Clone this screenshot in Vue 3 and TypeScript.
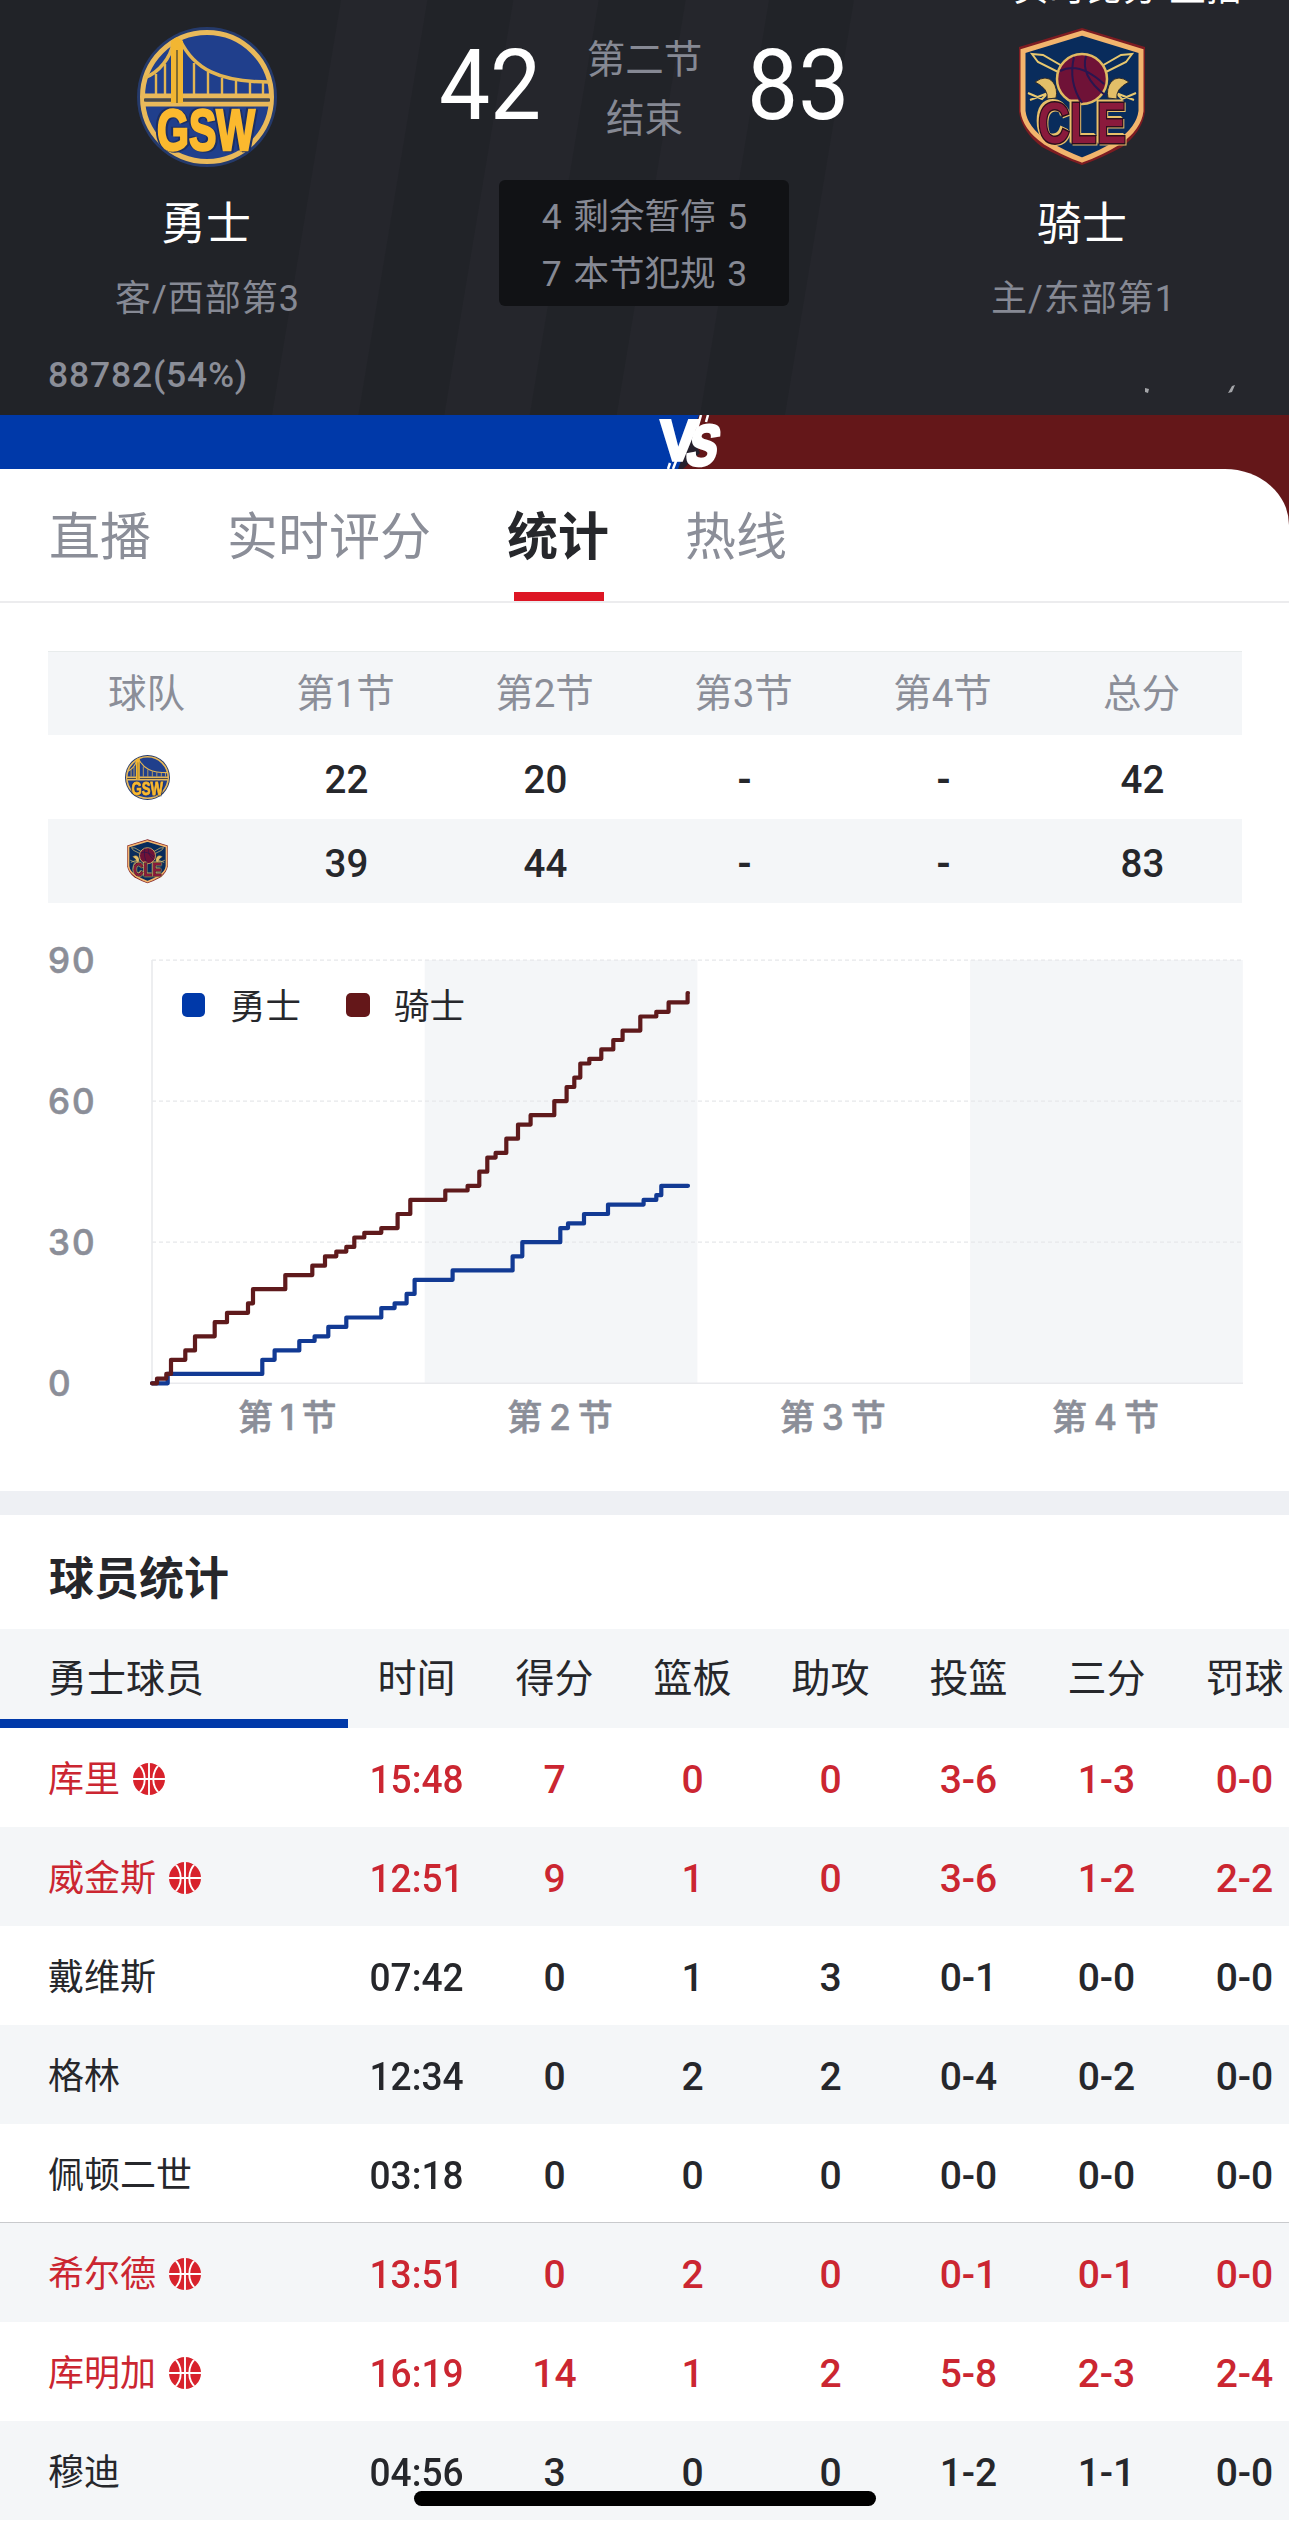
<script setup lang="ts">
import { computed } from 'vue'

interface Player {
  name: string
  onCourt: boolean
  stats: string[]
}

type Step = [number, number] // [x offset in the plot, score]

const tabs = ['直播', '实时评分', '统计', '热线']
const activeTab = '统计'

const quarterHeads = ['球队', '第1节', '第2节', '第3节', '第4节', '总分']
const quarterRows = [
  { logo: '#logo-gsw', scores: ['22', '20', '-', '-', '42'] },
  { logo: '#logo-cle', scores: ['39', '44', '-', '-', '83'] }
]

const statHeads = ['时间', '得分', '篮板', '助攻', '投篮', '三分', '罚球']
const players: Player[] = [
  { name: '库里', onCourt: true, stats: ['15:48', '7', '0', '0', '3-6', '1-3', '0-0'] },
  { name: '威金斯', onCourt: true, stats: ['12:51', '9', '1', '0', '3-6', '1-2', '2-2'] },
  { name: '戴维斯', onCourt: false, stats: ['07:42', '0', '1', '3', '0-1', '0-0', '0-0'] },
  { name: '格林', onCourt: false, stats: ['12:34', '0', '2', '2', '0-4', '0-2', '0-0'] },
  { name: '佩顿二世', onCourt: false, stats: ['03:18', '0', '0', '0', '0-0', '0-0', '0-0'] },
  { name: '希尔德', onCourt: true, stats: ['13:51', '0', '2', '0', '0-1', '0-1', '0-0'] },
  { name: '库明加', onCourt: true, stats: ['16:19', '14', '1', '2', '5-8', '2-3', '2-4'] },
  { name: '穆迪', onCourt: false, stats: ['04:56', '3', '0', '0', '1-2', '1-1', '0-0'] }
]

// Chart geometry
const left = 104
const bottom = 433.3
const perPoint = 4.703
const quarterWidth = 272.7
const end = 536

const awaySteps: Step[] = [
  [15.7, 2], [110.3, 5], [122.6, 7], [147.3, 9], [162.6, 10], [176.3, 12], [194.3, 14],
  [229.3, 16], [242.6, 17], [254.6, 19], [262.6, 22], [300.6, 24], [360.6, 27], [370.3, 30],
  [408.3, 33], [416, 34], [432, 36], [456, 38], [491.6, 39], [504.3, 40], [509.3, 42]
]
const homeSteps: Step[] = [
  [5, 1], [14.3, 2], [19, 5], [33.3, 7], [43, 10], [62.7, 13], [75, 15], [96, 17], [101, 20],
  [133.3, 23], [160.3, 25], [173, 27], [184.3, 28], [194.3, 29], [202.3, 31], [212.3, 32],
  [229.3, 33], [245.6, 36], [258.3, 39], [293.3, 41], [315.6, 42], [327.3, 45], [335.3, 48],
  [343.6, 49], [354.3, 52], [366, 55], [378.6, 57], [402.3, 60], [414.6, 63], [422.3, 65],
  [428.3, 68], [437.3, 69], [449.3, 71], [461.3, 73], [470.6, 75], [488.3, 78], [504.3, 79],
  [516.6, 81], [535.6, 83]
]

const scoreY = (score: number) => bottom - score * perPoint

function stepPath(steps: Step[]) {
  let d = `M${left} ${bottom}`
  for (const [x, score] of steps) {
    d += `H${(left + x).toFixed(1)}V${scoreY(score).toFixed(1)}`
  }
  return `${d}H${left + end}`
}

const awayPath = computed(() => stepPath(awaySteps))
const homePath = computed(() => stepPath(homeSteps))
</script>

<template>
  <div class="page">
    <!-- Shared logo symbols -->
    <svg class="defs" width="0" height="0">
      <symbol id="logo-gsw" viewBox="0 0 140 140">
        <circle cx="70" cy="70" r="70" fill="#253a6b" />
        <circle cx="70" cy="70" r="64.5" fill="#203f8c" stroke="#e9b95a" stroke-width="5" />
        <g fill="none" stroke="#e3b552">
          <path d="M7 51C22 46 34 30 36 16M43 13C57 42 82 55 132 55" stroke-width="3.5" />
          <path
            d="M19 47V67M28 37V67M57 36V67M71 45V67M85 51V67M99 54V67M113 55V67M126 55V67"
            stroke-width="2.4"
          />
        </g>
        <path d="M6 69H134M7 77H133" stroke="#e9b95a" stroke-width="5" />
        <path d="M7 73H133" stroke="#4d4a42" stroke-width="3" />
        <path d="M34 14L40 10L46 14V76H34Z" fill="#f2b632" />
        <path d="M40 23V76" stroke="#60552f" stroke-width="1.5" />
        <text
          x="69"
          y="123"
          text-anchor="middle"
          class="mark-text gsw-text"
          font-size="57"
          textLength="98"
          lengthAdjust="spacingAndGlyphs"
        >GSW</text>
      </symbol>
      <symbol id="logo-cle" viewBox="0 0 140 140">
        <path
          d="M70 1L133 20V85Q130 105 110 120Q90 131 70 138Q50 131 30 120Q10 105 7 85V20Z"
          fill="#7d1c22"
        />
        <path
          d="M70 6L129 24V84Q127 101 107 115Q89 126 70 133Q51 126 33 115Q13 101 11 84V24Z"
          fill="#092c5c"
          stroke="#f2b46d"
          stroke-width="5"
        />
        <g fill="none" stroke="#e8c86f" stroke-width="2">
          <path d="M20 27L31 28L52 40L48 46L26 35ZM120 27L109 28L88 40L92 46L114 35Z" />
          <path d="M16 66L30 72L40 62M18 73L36 66M124 66L110 72L100 62M122 73L104 66" />
        </g>
        <g fill="#e3bf68" stroke="#2c2a2c" stroke-width="1">
          <path d="M23 55Q34 47 41 55Q46 62 44 71L35 72Q37 62 23 55Z" />
          <path d="M117 55Q106 47 99 55Q94 62 96 71L105 72Q103 62 117 55Z" />
        </g>
        <circle cx="70" cy="52" r="25" fill="#6f1237" stroke="#e0ba62" stroke-width="2.5" />
        <path
          d="M62 30Q56 55 70 76M48 44Q67 34 92 57M74 29Q68 49 93 68"
          fill="none"
          stroke="#29164f"
          stroke-width="2"
        />
        <text
          x="70"
          y="116"
          text-anchor="middle"
          class="mark-text cle-text"
          font-size="57"
          textLength="88"
          lengthAdjust="spacingAndGlyphs"
        >CLE</text>
      </symbol>
      <symbol id="icon-ball" viewBox="0 0 32 32">
        <clipPath id="ball-clip"><circle cx="16" cy="16" r="16" /></clipPath>
        <g clip-path="url(#ball-clip)">
          <rect width="32" height="32" fill="#d8222c" />
          <path
            d="M16 0V32M0 16H32M5 1C14 9 14 23 5 31M27 1C18 9 18 23 27 31"
            fill="none"
            stroke="#fff"
            stroke-width="1.9"
          />
        </g>
      </symbol>
    </svg>

    <header class="scoreboard">
      <div class="ticker">实时比分 直播</div>
      <div class="match">
        <div class="team">
          <svg class="team-logo"><use href="#logo-gsw" /></svg>
          <div class="team-name">勇士</div>
          <div class="team-rank">客/西部第3</div>
        </div>
        <div class="center">
          <div class="score-line">
            <span class="score">42</span>
            <div class="period">
              <span>第二节</span>
              <span>结束</span>
            </div>
            <span class="score">83</span>
          </div>
          <div class="fouls">
            <span>4 剩余暂停 5</span>
            <span>7 本节犯规 3</span>
          </div>
        </div>
        <div class="team">
          <svg class="team-logo"><use href="#logo-cle" /></svg>
          <div class="team-name">骑士</div>
          <div class="team-rank">主/东部第1</div>
        </div>
      </div>
      <div class="support">
        <span>88782(54%)</span>
        <svg class="support-marks" width="94" height="12" viewBox="0 0 94 12">
          <path d="M4 4L8 5L7 9L4 8ZM91 2L94 1L91 8L87 9Z" fill="#a4a5a9" />
        </svg>
      </div>
    </header>

    <div class="vs-bar">
      <svg width="1289" height="54" viewBox="0 0 1289 54">
        <rect width="1289" height="54" fill="#641719" />
        <path d="M0 0H699L681 54H0Z" fill="#0039a9" />
        <path d="M699 0L693 22L700 38L683 54H678L690 22Z" fill="#26212d" />
        <g class="vs-text">
          <text transform="translate(659 45) skewX(-3)" font-size="57" textLength="37" lengthAdjust="spacingAndGlyphs">V</text>
          <text transform="translate(684 50) skewX(-14)" font-size="57" textLength="30" lengthAdjust="spacingAndGlyphs">S</text>
        </g>
        <path d="M701 0L697 14M708 0L706 7M678 41L673 54M670 48L668 54" stroke="#fff" stroke-width="2.5" />
      </svg>
    </div>

    <div class="sheet-wrap">
      <nav class="tabs">
        <div v-for="tab in tabs" :key="tab" class="tab" :class="{ active: tab === activeTab }">
          {{ tab }}
        </div>
      </nav>
    </div>

    <section class="quarters">
      <div class="quarter-row head">
        <span v-for="head in quarterHeads" :key="head">{{ head }}</span>
      </div>
      <div v-for="row in quarterRows" :key="row.logo" class="quarter-row">
        <span class="logo-cell"><svg class="small-logo"><use :href="row.logo" /></svg></span>
        <span
          v-for="(score, i) in row.scores"
          :key="i"
          :class="{ blank: score === '-' }"
        >{{ score }}</span>
      </div>
    </section>

    <section class="chart">
      <svg width="1195" height="500" viewBox="0 0 1195 500">
        <rect :x="left + quarterWidth" y="10" :width="quarterWidth" height="423" fill="#f4f6f8" />
        <rect :x="left + quarterWidth * 3" y="10" :width="quarterWidth" height="423" fill="#f4f6f8" />
        <g stroke="#e6e7ea" stroke-width="1.3" fill="none">
          <path
            v-for="mark in [30, 60, 90]"
            :key="mark"
            :d="`M${left} ${scoreY(mark)}H1195`"
            stroke-dasharray="4 3"
          />
          <path :d="`M${left} 10V${bottom}H1195`" stroke="#e9eaed" stroke-width="1.6" />
        </g>
        <g class="axis-text">
          <text v-for="mark in [0, 30, 60, 90]" :key="mark" x="0" :y="scoreY(mark) + 13">{{ mark }}</text>
          <text
            v-for="q in 4"
            :key="q"
            class="quarter-label"
            :x="left + quarterWidth * (q - 0.5) + 2.5"
            y="480"
            text-anchor="middle"
          >第{{ q }}节</text>
        </g>
        <g class="legend-text">
          <rect x="134" y="43" width="23" height="24" rx="5" fill="#0039a9" />
          <text x="182" y="69">勇士</text>
          <rect x="298" y="43" width="24" height="24" rx="5" fill="#641719" />
          <text x="346" y="69">骑士</text>
        </g>
        <g fill="none" stroke-width="4.2" stroke-linecap="round" stroke-linejoin="round">
          <path :d="awayPath" stroke="#123a94" />
          <path :d="homePath" stroke="#5f1a1c" />
        </g>
      </svg>
    </section>

    <div class="divider" />

    <section class="players">
      <h2>球员统计</h2>
      <div class="player-row head">
        <div class="name">勇士球员</div>
        <div v-for="head in statHeads" :key="head" class="stat">{{ head }}</div>
      </div>
      <div
        v-for="(player, i) in players"
        :key="player.name"
        class="player-row"
        :class="{ live: player.onCourt, striped: i % 2 === 1, split: i === 4 }"
      >
        <div class="name">
          <span>{{ player.name }}</span>
          <svg v-if="player.onCourt" class="ball"><use href="#icon-ball" /></svg>
        </div>
        <div
          v-for="(stat, j) in player.stats"
          :key="j"
          class="stat"
          :class="{ time: j === 0 }"
        >{{ stat }}</div>
      </div>
    </section>

    <div class="home-indicator" />
  </div>
</template>

<style>
body {
  margin: 0;
  background: #fff;
}
</style>

<style scoped>
.page {
  position: relative;
  width: 1289px;
  height: 2530px;
  overflow: hidden;
  background: #fff;
  color: #26272b;
  font-family: Roboto, 'Noto Sans CJK SC', sans-serif;
}

.defs {
  position: absolute;
}

.mark-text,
.vs-text {
  font-family: 'Liberation Sans Narrow', 'Liberation Sans', sans-serif;
  font-weight: 700;
}

.gsw-text {
  fill: #fbb92e;
  stroke: #fbb92e;
  stroke-width: 2.5px;
  filter: drop-shadow(2px 1px 0 #1b2f66) drop-shadow(-2px -1px 0 #1b2f66);
}

.cle-text {
  fill: #8a1a3c;
  stroke: #2a0f1e;
  stroke-width: 3px;
  paint-order: stroke;
  filter: drop-shadow(1.5px 1.5px 0 #e8c06a) drop-shadow(-1.5px -1.5px 0 #e8c06a);
}

.vs-text {
  fill: #fff;
  stroke: #fff;
  stroke-width: 3.5px;
}

.scoreboard {
  position: relative;
  height: 415px;
  overflow: hidden;
  background: linear-gradient(
    99.44deg,
    #212328 336px,
    #25262c 337px 421px,
    #212328 422px 506px,
    #25262c 507px 590px,
    #212328 591px 676px,
    #25262c 677px 758px,
    #212328 759px 842px,
    #25262c 843px
  );
}

.ticker {
  position: absolute;
  top: -30px;
  right: 46px;
  color: #fff;
  font-size: 36px;
  line-height: 38px;
  letter-spacing: 0.8px;
}

.match {
  display: flex;
  justify-content: space-between;
  height: 340px;
}

.team {
  display: flex;
  flex-direction: column;
  align-items: center;
  width: 413px;
  padding-top: 27px;
}

.team-logo {
  width: 140px;
  height: 140px;
}

.team-name {
  margin-top: 28px;
  padding-right: 1px;
  color: #fff;
  font-size: 45px;
  line-height: 60px;
}

.team-rank {
  margin-top: 19px;
  padding-left: 2px;
  color: #868994;
  font-size: 36px;
  line-height: 50px;
  letter-spacing: 1px;
}

.center {
  display: flex;
  flex-direction: column;
  align-items: center;
  padding-top: 30px;
}

.score-line {
  display: flex;
  gap: 45px;
  height: 150px;
}

.score {
  color: #fff;
  font-size: 99px;
  line-height: 110px;
  transform: scaleX(0.92);
}

.score:first-child {
  transform-origin: right;
}

.score:last-child {
  transform-origin: left;
}

.period {
  display: flex;
  flex-direction: column;
  align-items: center;
  color: #868994;
  font-size: 38.5px;
  line-height: 59px;
}

.fouls {
  display: flex;
  flex-direction: column;
  align-items: center;
  width: 290px;
  height: 126px;
  padding-top: 9px;
  box-sizing: border-box;
  border-radius: 6px;
  background: #111215;
  color: #868994;
  font-size: 35.5px;
  line-height: 57px;
  word-spacing: 3px;
}

.support {
  display: flex;
  align-items: center;
  justify-content: space-between;
  height: 70px;
  padding: 0 54px 0 48px;
  color: #8b8e98;
  font-size: 35.5px;
  font-weight: 500;
  letter-spacing: 0.8px;
}

.support-marks {
  margin-top: 30px;
}

.vs-bar {
  height: 54px;
}

.vs-bar svg {
  display: block;
}

.sheet-wrap {
  background: #641719;
}

.tabs {
  display: flex;
  gap: 76px;
  height: 132px;
  padding-left: 49px;
  border-bottom: 2px solid #ececee;
  border-top-right-radius: 64px 56px;
  background: #fff;
}

.tab {
  position: relative;
  height: 132px;
  color: #8b8e98;
  font-size: 51px;
  line-height: 137px;
}

.tab.active {
  color: #26272b;
  font-weight: 700;
}

.tab.active::after {
  content: '';
  position: absolute;
  left: 7px;
  right: 5px;
  bottom: 0;
  height: 9px;
  background: #dd1624;
}

.quarters {
  margin: 48px 47px 0 48px;
}

.quarter-row {
  display: grid;
  grid-template-columns: repeat(6, 1fr);
  align-items: center;
  height: 84px;
  text-align: center;
  font-size: 38.5px;
  font-weight: 500;
  line-height: 84px;
}

.quarter-row span {
  padding-top: 3px;
  height: 81px;
}

.quarter-row span.blank {
  font-weight: 700;
}

.quarter-row.head,
.quarter-row:last-child {
  background: #f4f6f8;
}

.quarter-row.head {
  color: #8b8e98;
  font-weight: 400;
  border-top: 1px solid #e8ecec;
  height: 83px;
}

.quarter-row.head span {
  box-sizing: border-box;
  padding: 0 2px 0 0;
  height: 84px;
  line-height: 84px;
}

.quarter-row .logo-cell {
  display: flex;
  align-items: center;
  justify-content: center;
  padding: 0;
}

.small-logo {
  width: 45px;
  height: 45px;
}

.chart {
  height: 541px;
  padding: 47px 46px 0 48px;
}

.chart svg {
  display: block;
  overflow: visible;
}

.axis-text {
  fill: #8b8e98;
  font-family: Inter, 'Noto Sans CJK SC', sans-serif;
  font-size: 35px;
  font-weight: 500;
  letter-spacing: 2px;
  stroke: #8b8e98;
  stroke-width: 0.6px;
}

.quarter-label {
  letter-spacing: 7px;
}

.legend-text {
  font-size: 35.5px;
  fill: #26272b;
}

.divider {
  height: 24px;
  background: #eef0f4;
}

.players h2 {
  margin: 0;
  height: 114px;
  padding-left: 49px;
  font-size: 45px;
  font-weight: 700;
  line-height: 130px;
}

.player-row {
  display: grid;
  grid-template-columns: 348px repeat(7, 138px);
  height: 99px;
  line-height: 105px;
}

.player-row.head {
  background: #f4f6f8;
  line-height: 101px;
}

.player-row.striped {
  background: #f4f6f8;
}

.player-row.live {
  color: #cb2631;
}

.player-row.split {
  box-sizing: border-box;
  border-bottom: 1px solid #c9cacd;
}

.name {
  display: flex;
  align-items: center;
  gap: 13px;
  height: 101px;
  padding-left: 48px;
  font-size: 36px;
}

.name span {
  padding-top: 4px;
}

.head .name {
  align-items: flex-start;
  border-bottom: 9px solid #0039a9;
  height: 90px;
}

.head .name,
.head .stat {
  font-size: 39px;
  font-weight: 400;
}

.stat {
  padding-right: 1px;
  text-align: center;
  font-size: 39px;
  font-weight: 500;
}

.stat.time {
  transform: scaleX(0.95);
}

.ball {
  width: 32px;
  height: 32px;
}

.home-indicator {
  position: absolute;
  left: 414px;
  bottom: 24px;
  width: 462px;
  height: 15px;
  border-radius: 8px;
  background: #000;
}
</style>
